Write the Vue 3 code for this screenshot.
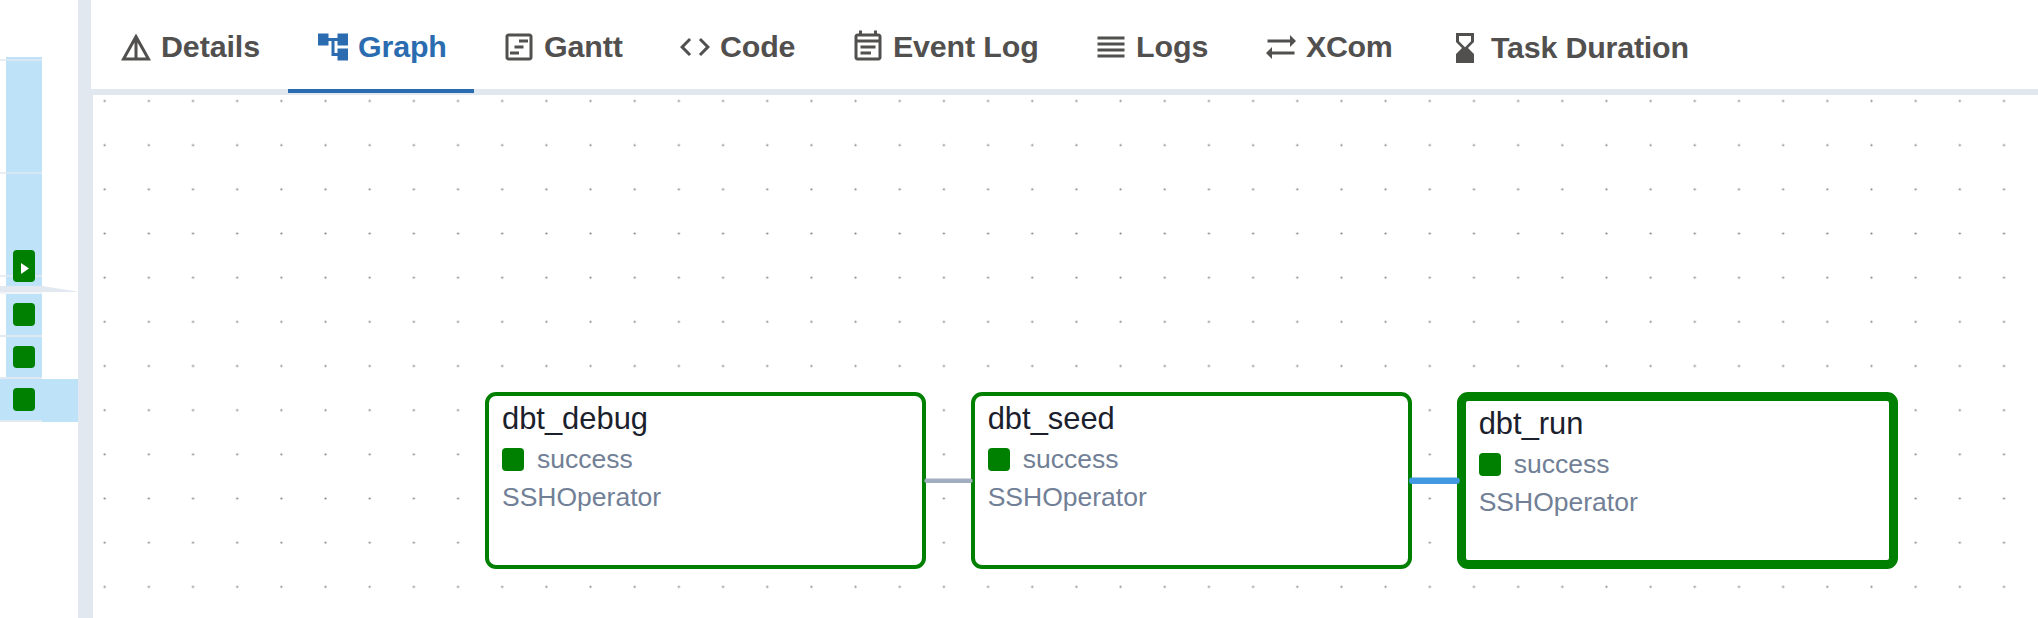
<script setup>
const tabs = [
  { name: 'Details', width: 197, spacing: -0.1, icon: 'M12 3L2 21h20L12 3zm1 5.92L18.6 19H13V8.92zm-2 0V19H5.4L11 8.92z' },
  { name: 'Graph', width: 186, spacing: -0.15, active: true, icon: 'M22 11V3h-7v3H9V3H2v8h7V8h2v10h4v3h7v-8h-7v3h-2V8h2v3z' },
  { name: 'Gantt', width: 176, spacing: -0.1, icon: 'M19 5v14H5V5h14m0-2H5c-1.1 0-2 .9-2 2v14c0 1.1.9 2 2 2h14c1.1 0 2-.9 2-2V5c0-1.1-.9-2-2-2zM12 7h6v2h-6zM9 11h6v2H9zM6 15h6v2H6z' },
  { name: 'Code', width: 173, spacing: -0.15, icon: 'M9.4 16.6 4.8 12l4.6-4.6L8 6l-6 6 6 6 1.4-1.4zm5.2 0 4.6-4.6-4.6-4.6L16 6l6 6-6 6-1.4-1.4z' },
  { name: 'Event Log', width: 243, spacing: -0.15, icon: 'M19 3h-1V1h-2v2H8V1H6v2H5c-1.11 0-1.99.9-1.99 2L3 19c0 1.1.89 2 2 2h14c1.1 0 2-.9 2-2V5c0-1.1-.9-2-2-2zm0 16H5V9h14v10zm0-12H5V5h14v2zM7 11h10v2H7zm0 4h7v2H7z' },
  { name: 'Logs', width: 170, spacing: -0.1, icon: 'M3 15h18v-2H3v2zm0 4h18v-2H3v2zm0-8h18V9H3v2zm0-6v2h18V5H3z' },
  { name: 'XCom', width: 184, spacing: -0.35, icon: 'M22 8l-4-4v3H3v2h15v3l4-4zM2 16l4 4v-3h15v-2H6v-3l-4 4z' },
  { name: 'Task Duration', width: 300, spacing: -0.2, low: true, icon: 'M18 22l-.01-6L14 12l3.99-4.01L18 2H6v6l4 4-4 3.99V22h12zM8 7.5V4h8v3.5l-4 4-4-4z' },
]
const nodes = [
  { id: 'dbt_debug', x: 392 },
  { id: 'dbt_seed', x: 877.7 },
  { id: 'dbt_run', x: 1363.7, selected: true },
]
</script>

<template>
  <div class="app">
    <aside class="grid">
      <div class="bars">
        <div class="rule first"></div>
        <div class="rule second"></div>
        <div class="run"><svg viewBox="0 0 8 11"><path d="M0 0L8 5.5L0 11z" fill="#fff" /></svg></div>
      </div>
      <svg class="taper" viewBox="0 0 78 8"><path d="M0 6H42V8H0z" fill="#f0f4f9" /><path d="M0 0H42L77 5.5V6H0z" fill="#e2e8f0" /></svg>
      <div class="cell a"><i class="state"></i></div>
      <div class="cell b"><i class="state"></i></div>
      <div class="cell picked"><i class="state"></i></div>
    </aside>
    <div class="divider"></div>
    <main>
      <nav>
        <div v-for="t in tabs" :key="t.name" class="tab" :class="{ active: t.active, low: t.low }" :style="{ width: t.width + 'px' }">
          <svg viewBox="0 0 24 24"><path :d="t.icon" fill="currentColor" /></svg>
          <span :style="{ letterSpacing: t.spacing + 'px' }">{{ t.name }}</span>
        </div>
      </nav>
      <section class="canvas">
        <svg class="dots">
          <defs>
            <pattern id="dot" x="-10.4" y="-16.1" width="44.17" height="44.17" patternUnits="userSpaceOnUse">
              <circle cx="22.085" cy="22.085" r="1.1" fill="#81818a" />
            </pattern>
          </defs>
          <rect width="100%" height="100%" fill="url(#dot)" />
        </svg>
        <div v-for="n in nodes" :key="n.id" class="node" :class="{ selected: n.selected }" :style="{ left: n.x + 'px' }">
          <div class="name">{{ n.id }}</div>
          <div class="status"><i class="state"></i>success</div>
          <div class="operator">SSHOperator</div>
        </div>
        <svg class="edges">
          <path d="M833.5 385.7H877.5" stroke="#a0aec0" stroke-width="4.4" />
          <path d="M1319.3 385.7H1363.5" stroke="#4299e1" stroke-width="6.6" />
        </svg>
      </section>
    </main>
  </div>
</template>

<style>
body { margin: 0; background: #fff; }
</style>

<style scoped>
.app {
  display: flex;
  width: 2038px;
  height: 618px;
  overflow: hidden;
  background: #fff;
  font-family: "Liberation Sans", Arial, sans-serif;
}
.grid { width: 78px; flex: none; padding-top: 57px; box-sizing: border-box; }
.bars {
  height: 229px;
  box-sizing: border-box;
  background: linear-gradient(#bee3f8, #bee3f8) 6px 0 / 36px 100% no-repeat;
  display: flex;
  flex-direction: column;
}
.rule { width: 42px; height: 2px; background: rgba(226, 232, 240, 0.75); flex: none; }
.first { margin-top: 2px; }
.second { margin-top: 111px; }
.run {
  width: 42px;
  height: 32px;
  margin-top: 76px;
  display: flex;
  align-items: center;
  background:
    linear-gradient(rgba(226, 232, 240, 0.75), rgba(226, 232, 240, 0.75)) 0 25px / 42px 2px no-repeat;
}
.run::before {
  content: "";
  width: 22px;
  height: 32px;
  flex: none;
  margin-left: 13px;
  border-radius: 4px;
  background: #008000;
}
.run svg { flex: none; width: 8px; height: 11px; margin: 4px 0 0 -14px; z-index: 1; }
.taper { display: block; width: 78px; height: 8px; }
.cell {
  box-sizing: border-box;
  width: 42px;
  padding-left: 13px;
  background: linear-gradient(#bee3f8, #bee3f8) 6px 0 / 36px 100% no-repeat;
  border-bottom: 2px solid #e2e8f0;
}
.a { height: 43px; padding-top: 9px; }
.b { height: 42px; padding-top: 9px; }
.b .state { height: 22px; }
.picked {
  width: 78px;
  height: 43px;
  padding-top: 9px;
  border: 0;
  background:
    linear-gradient(#e2e8f0, #e2e8f0) 0 100% / 42px 2px no-repeat,
    #bee3f8;
}
.state {
  display: block;
  flex: none;
  width: 22px;
  height: 23px;
  border-radius: 4px;
  background: #008000;
}
.divider { width: 13px; flex: none; background: #e2e8f0; }
main { width: 1947px; flex: none; display: flex; flex-direction: column; }
nav {
  height: 95px;
  flex: none;
  box-sizing: border-box;
  border-bottom: 6px solid #e2e8f0;
  display: flex;
}
.tab {
  box-sizing: border-box;
  flex: none;
  height: 93px;
  padding: 28px 0 0 27px;
  display: flex;
  gap: 7px;
  color: #51504f;
  font-size: 30.4px;
  font-weight: 700;
  line-height: 36px;
  white-space: nowrap;
}
.tab svg { width: 36px; height: 36px; flex: none; margin-top: 0.5px; }
.active { color: #2b6cb0; border-bottom: 4px solid #2b6cb0; }
.low { padding-top: 29px; gap: 8px; }
.low svg { margin-top: 1px; }
.canvas {
  position: relative;
  flex: 1;
  border-left: 2px solid #e2e8f0;
}
.dots, .edges { position: absolute; left: 0; top: 0; width: 100%; height: 100%; }
.edges path { fill: none; stroke-linecap: round; }
.node {
  position: absolute;
  top: 297.4px;
  width: 441.3px;
  height: 176.7px;
  box-sizing: border-box;
  border: 4px solid #008000;
  border-radius: 11px;
  background: #fff;
  padding: 3px 13px;
  color: #718096;
  font-size: 26.5px;
  line-height: 38px;
}
.selected { border-width: 9px; }
.name { color: #1a202c; font-size: 30.9px; line-height: 40px; }
.status { display: flex; align-items: center; gap: 13px; padding-top: 1px; }
</style>
